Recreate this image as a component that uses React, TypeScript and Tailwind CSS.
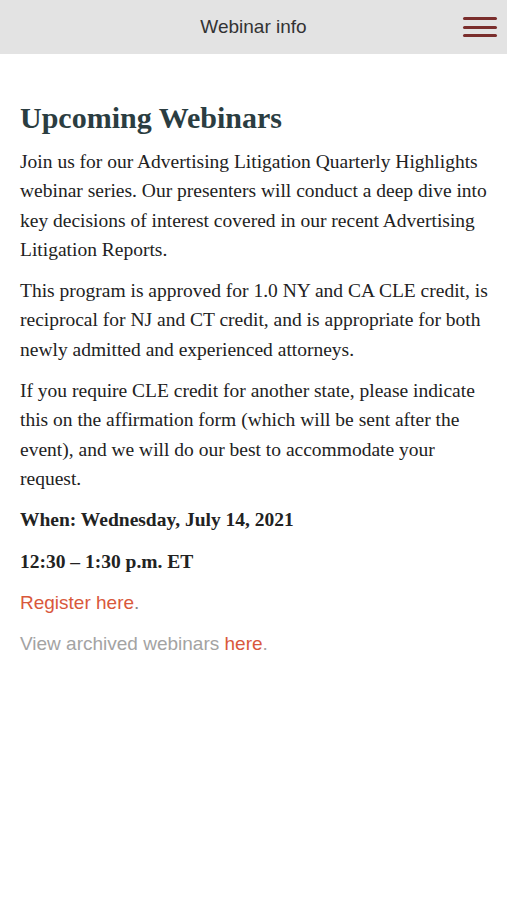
const serif = "font-['Liberation_Serif','Times_New_Roman',serif]";
const sans = "font-['Liberation_Sans',Arial,sans-serif]";

const paragraphs = [
  "Join us for our Advertising Litigation Quarterly Highlights webinar series. Our presenters will conduct a deep dive into key decisions of interest covered in our recent Advertising Litigation Reports.",
  "This program is approved for 1.0 NY and CA CLE credit, is reciprocal for NJ and CT credit, and is appropriate for both newly admitted and experienced attorneys.",
  "If you require CLE credit for another state, please indicate this on the affirmation form (which will be sent after the event), and we will do our best to accommodate your request.",
];

const App = () => {
  return (
    <div className="min-h-[900px] w-full bg-white">
      <header className="relative flex h-[54px] items-center justify-center bg-[#e3e3e3]">
        <h1 className={`${sans} text-[19px] text-[#333]`}>Webinar info</h1>
        <button className="absolute right-[10px] top-[17px] flex w-[34px] flex-col gap-[5.5px]">
          <span className="h-[3px] w-full rounded-full bg-[#7a2e2c]" />
          <span className="h-[3px] w-full rounded-full bg-[#7a2e2c]" />
          <span className="h-[3px] w-full rounded-full bg-[#7a2e2c]" />
        </button>
      </header>
      <main className={`${serif} pl-[20px] pr-[12px] pt-[45px] text-[19.5px] leading-[29.3px] text-[#222]`}>
        <h2 className="mb-[10px] text-[30px] font-bold leading-[38px] text-[#2b3d41]">
          Upcoming Webinars
        </h2>
        <div className="flex flex-col gap-[12px]">
          {paragraphs.map((text, index) => (
            <p key={index}>{text}</p>
          ))}
          <p className="font-bold">When: Wednesday, July 14, 2021</p>
          <p className="font-bold">12:30 – 1:30 p.m. ET</p>
          <p className={`${sans} text-[19px] text-[#d9583b]`}>
            Register here<span className="text-[#888]">.</span>
          </p>
          <p className={`${sans} text-[19px] text-[#a3a3a3]`}>
            View archived webinars <span className="text-[#d9583b]">here</span>.
          </p>
        </div>
      </main>
    </div>
  );
};

export default App;
